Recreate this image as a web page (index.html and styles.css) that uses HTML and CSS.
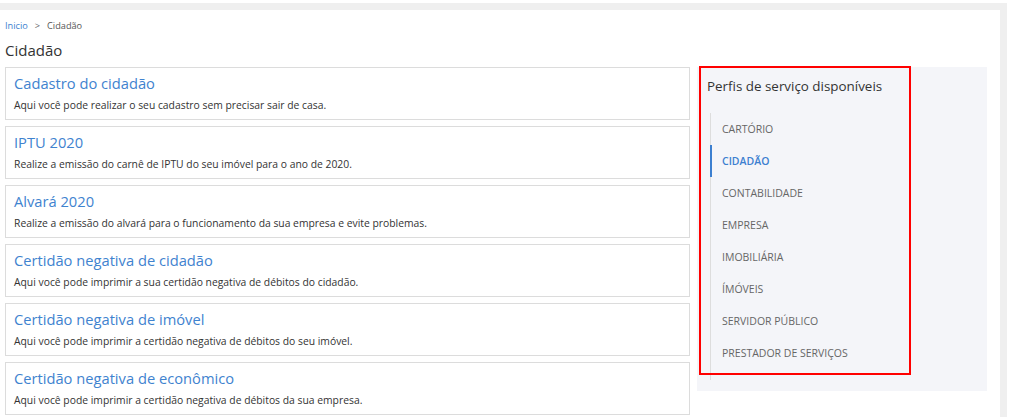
FILE: index.html
```html
<!DOCTYPE html>
<html lang="pt-BR">
<head>
<meta charset="utf-8">
<link rel="stylesheet" href="styles.css">
</head>
<body>
<div class="frame">
  <div class="panel">
    <nav class="crumbs"><a class="crumb-link">Inicio</a><span class="sep">&gt;</span><span class="crumb-cur">Cidadão</span></nav>
    <h1 class="page-title">Cidadão</h1>
    <div class="content">
      <div class="cards">
        <div class="card"><div class="card-title">Cadastro do cidadão</div><div class="card-desc">Aqui você pode realizar o seu cadastro sem precisar sair de casa.</div></div>
        <div class="card"><div class="card-title">IPTU 2020</div><div class="card-desc">Realize a emissão do carnê de IPTU do seu imóvel para o ano de 2020.</div></div>
        <div class="card"><div class="card-title">Alvará 2020</div><div class="card-desc">Realize a emissão do alvará para o funcionamento da sua empresa e evite problemas.</div></div>
        <div class="card"><div class="card-title">Certidão negativa de cidadão</div><div class="card-desc">Aqui você pode imprimir a sua certidão negativa de débitos do cidadão.</div></div>
        <div class="card"><div class="card-title">Certidão negativa de imóvel</div><div class="card-desc">Aqui você pode imprimir a certidão negativa de débitos do seu imóvel.</div></div>
        <div class="card"><div class="card-title">Certidão negativa de econômico</div><div class="card-desc">Aqui você pode imprimir a certidão negativa de débitos da sua empresa.</div></div>
      </div>
      <aside class="sidebar">
        <div class="highlight"></div>
        <div class="side-title">Perfis de serviço disponíveis</div>
        <ul class="profiles">
          <li class="profile">CARTÓRIO</li>
          <li class="profile active">CIDADÃO</li>
          <li class="profile">CONTABILIDADE</li>
          <li class="profile">EMPRESA</li>
          <li class="profile">IMOBILIÁRIA</li>
          <li class="profile">ÍMÓVEIS</li>
          <li class="profile">SERVIDOR PÚBLICO</li>
          <li class="profile">PRESTADOR DE SERVIÇOS</li>
        </ul>
      </aside>
    </div>
  </div>
</div>
</body>
</html>
```

FILE: styles.css
```css
* { box-sizing: border-box; }
html, body { margin: 0; padding: 0; background: #ffffff; }
body {
  font-family: "Open Sans", "Liberation Sans", sans-serif;
  color: #333333;
  height: 417px;
  overflow: hidden;
}
.frame {
  margin-top: 3px;
  width: 1007px;
  background: #efefef;
  padding: 7px 7px 0 0;
  height: 414px;
}
.panel {
  background: #ffffff;
  height: 100%;
  padding: 0 0 0 5px;
}
.crumbs {
  display: flex;
  align-items: center;
  height: 30px;
  font-size: 9.2px;
  color: #555555;
}
.crumb-link { color: #3c7fd0; }
.sep { margin: 0 7px; color: #666; }
.page-title {
  margin: 0;
  font-size: 15px;
  font-weight: 400;
  line-height: 20px;
  height: 27px;
  color: #333333;
}
.content {
  display: flex;
  gap: 7px;
}
.cards {
  width: 685px;
  display: flex;
  flex-direction: column;
  gap: 6px;
}
.card {
  border: 1px solid #dcdcdc;
  height: 53px;
  padding: 5px 8px 0 8px;
}
.card-title {
  font-size: 14.7px;
  line-height: 20px;
  color: #3f83cf;
}
.card-desc {
  margin-top: 4px;
  font-size: 10.35px;
  line-height: 16px;
  color: #333333;
}
.sidebar {
  position: relative;
  width: 290px;
  height: 324px;
  background: #f4f5f9;
  padding: 9px 0 0 10px;
}
.highlight {
  position: absolute;
  left: 2px;
  top: -1px;
  width: 212px;
  height: 309px;
  border: 2px solid #ff0000;
}
.side-title {
  font-size: 13.4px;
  line-height: 20px;
  color: #333333;
}
.profiles {
  list-style: none;
  margin: 17px 0 0 3px;
  padding: 0;
  border-left: 1px solid #dddddd;
  height: 267px;
}
.profile {
  height: 32px;
  line-height: 32px;
  padding-left: 11px;
  font-size: 10.5px;
  color: #666666;
}
.profile.active {
  color: #3c7fd0;
  font-weight: 600;
  border-left: 2px solid #3c7fd0;
  margin-left: -1px;
  padding-left: 10px;
}
```
